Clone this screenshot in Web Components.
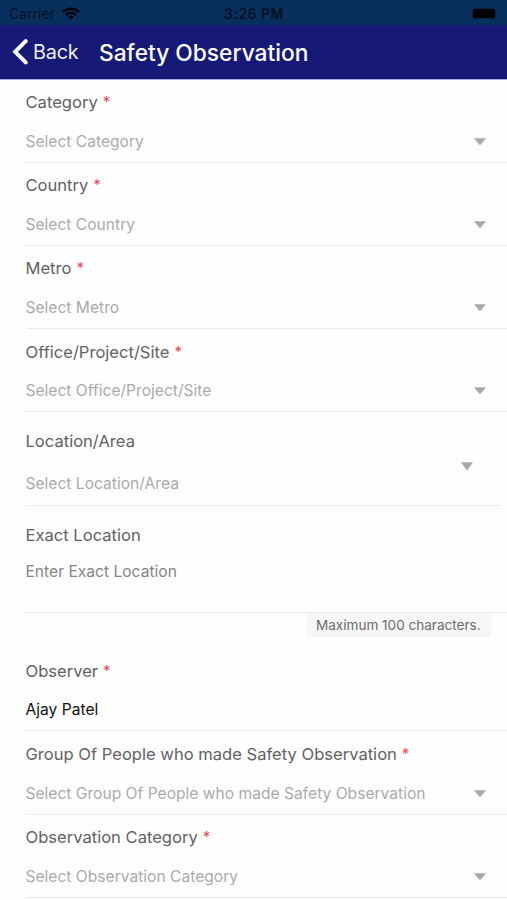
<!DOCTYPE html>
<html lang="en">
<head>
<meta charset="utf-8">
<title>Safety Observation</title>
<style>
  html, body { margin: 0; }
  body { height: 900px; overflow: hidden; background: #fefefe; font-family: Inter, "Liberation Sans", sans-serif; }
</style>
</head>
<body>
<safety-app></safety-app>
<script>
const define = (name, html) => {
  const t = document.createElement('template');
  t.innerHTML = html;
  customElements.define(name, class extends HTMLElement {
    constructor() {
      super();
      this.attachShadow({ mode: 'open' }).append(t.content.cloneNode(true));
    }
  });
};

define('status-bar', `
<style>
  :host { display: grid; grid-template-columns: 1fr auto 1fr; align-items: center; height: 25px; box-sizing: border-box;
    padding: 2px 8px 0 9px; background: #07305f; color: #05101f; }
  .left { display: flex; align-items: center; gap: 7px; font-size: 14px; line-height: 20px; }
  .time { font-size: 14px; font-weight: 600; line-height: 20px; letter-spacing: .48px; }
  .batt { justify-self: end; }
  svg { display: block; }
</style>
<div class="left"><span>Carrier</span>
<svg width="18" height="13" viewBox="0 0 18 13" fill="none" stroke="#020509" stroke-width="2.7">
  <path d="M.9 5.1C5.4.6 12.6.6 17.1 5.1M3.9 8.1c2.9-2.8 7.3-2.8 10.2 0"/><path d="M9 12.6 6.2 9.9q2.8-2.3 5.6 0z" fill="#020509" stroke="none"/>
</svg></div>
<span class="time">3:26 PM</span>
<svg class="batt" width="28" height="13" viewBox="0 0 28 13"><rect x=".5" y=".5" width="25" height="12" rx="3.5" fill="#06264b"/><rect x="2" y="2" width="22" height="9" rx="1.5" fill="#000"/><path d="M26.5 4.5q1.4 2 0 4z" fill="#06264b"/></svg>
`);

define('nav-bar', `
<style>
  :host { display: flex; align-items: center; height: 55px; box-sizing: border-box; padding: 0 12px;
    background: #161a76; color: #fff; border-bottom: 1px solid #a9acd6; }
  .back { display: flex; align-items: center; gap: 5px; width: 87px; font-size: 19.8px; letter-spacing: -.2px; line-height: 28px; color: #eeeefa; }
  .title { font-size: 22.75px; font-weight: 500; line-height: 30px; padding-top: 2px; white-space: nowrap; }
  svg { display: block; flex: none; }
</style>
<div class="back"><svg width="16" height="26" viewBox="0 0 16 26" fill="none" stroke="#fff" stroke-width="4" stroke-linecap="round" stroke-linejoin="miter"><path d="M13.7 2.2 3.2 12.8l10.5 10.6"/></svg><span><slot name="back"></slot></span></div>
<div class="title"><slot></slot></div>
`);

define('drop-arrow', `
<style>:host { display: block; height: var(--arrow, 7px); } svg { display: block; }</style>
<svg width="12" height="100%" viewBox="0 0 12 7" preserveAspectRatio="none"><path d="M0 .2h12L6.8 6.6q-.8.7-1.6 0z" fill="#a8a8a8"/></svg>
`);

define('form-field', `
<style>
  :host { display: flex; flex-direction: column; height: var(--h, 83px); box-sizing: border-box;
    padding: var(--top, 10px) 21px 0 0; margin-left: 25.5px; border-bottom: 1px solid #ececec; }
  .label { height: 24px; font-size: 16.57px; line-height: 24px; color: #626262; white-space: nowrap; }
  .row { display: flex; justify-content: space-between; align-items: center; height: 24px; margin-top: var(--gap, 16px); }
  .value { font-size: 15.6px; line-height: 24px; color: var(--value, #ababab); white-space: nowrap; }
</style>
<div class="label"><slot name="label"></slot><slot name="req"></slot></div>
<div class="row"><span class="value"><slot></slot></span><slot name="arrow"></slot></div>
`);

define('limit-note', `
<style>
  :host { display: block; width: max-content; margin-left: 306px; padding: 1px 10px 0; border-radius: 0 0 3px 3px;
    background: #f5f7f9; color: #6c6c6c; font-size: 13.55px; line-height: 23px; white-space: nowrap; }
</style><slot></slot>
`);

define('safety-app', `
<style>
  :host { display: block; }
  [slot=req] { display: inline-block; height: 20px; line-height: 20px; vertical-align: top; font-size: 14.5px; font-weight: 500; color: #ee4d62; margin-left: 5px; padding-top: 2px; }
  drop-arrow { margin-top: -2px; }
  .office { --top: 11px; --gap: 15px; }
  .location { --h: 94px; --top: 17px; --gap: 19px; margin-right: 6px; padding-right: 28px; }
  .location drop-arrow { margin-top: -36px; --arrow: 8px; }
  .exact { --h: 107px; --gap: 13px; --value: #858585; --top: 17px; }
  .observer { --h: 83px; --gap: 15px; --value: #111; --top: 11px; margin-top: 11px; }
  .group { --h: 84px; --top: 11px; }
</style>
<status-bar></status-bar>
<nav-bar><span slot="back">Back</span>Safety Observation</nav-bar>
<form-field><span slot="label">Category</span><span slot="req">*</span>Select Category<drop-arrow slot="arrow"></drop-arrow></form-field>
<form-field><span slot="label">Country</span><span slot="req">*</span>Select Country<drop-arrow slot="arrow"></drop-arrow></form-field>
<form-field><span slot="label">Metro</span><span slot="req">*</span>Select Metro<drop-arrow slot="arrow"></drop-arrow></form-field>
<form-field class="office"><span slot="label">Office/Project/Site</span><span slot="req">*</span>Select Office/Project/Site<drop-arrow slot="arrow"></drop-arrow></form-field>
<form-field class="location"><span slot="label">Location/Area</span>Select Location/Area<drop-arrow slot="arrow"></drop-arrow></form-field>
<form-field class="exact"><span slot="label">Exact Location</span>Enter Exact Location</form-field>
<limit-note>Maximum 100 characters.</limit-note>
<form-field class="observer"><span slot="label">Observer</span><span slot="req">*</span>Ajay Patel</form-field>
<form-field class="group"><span slot="label">Group Of People who made Safety Observation</span><span slot="req">*</span>Select Group Of People who made Safety Observation<drop-arrow slot="arrow"></drop-arrow></form-field>
<form-field><span slot="label">Observation Category</span><span slot="req">*</span>Select Observation Category<drop-arrow slot="arrow"></drop-arrow></form-field>
`);
</script>
</body>
</html>
